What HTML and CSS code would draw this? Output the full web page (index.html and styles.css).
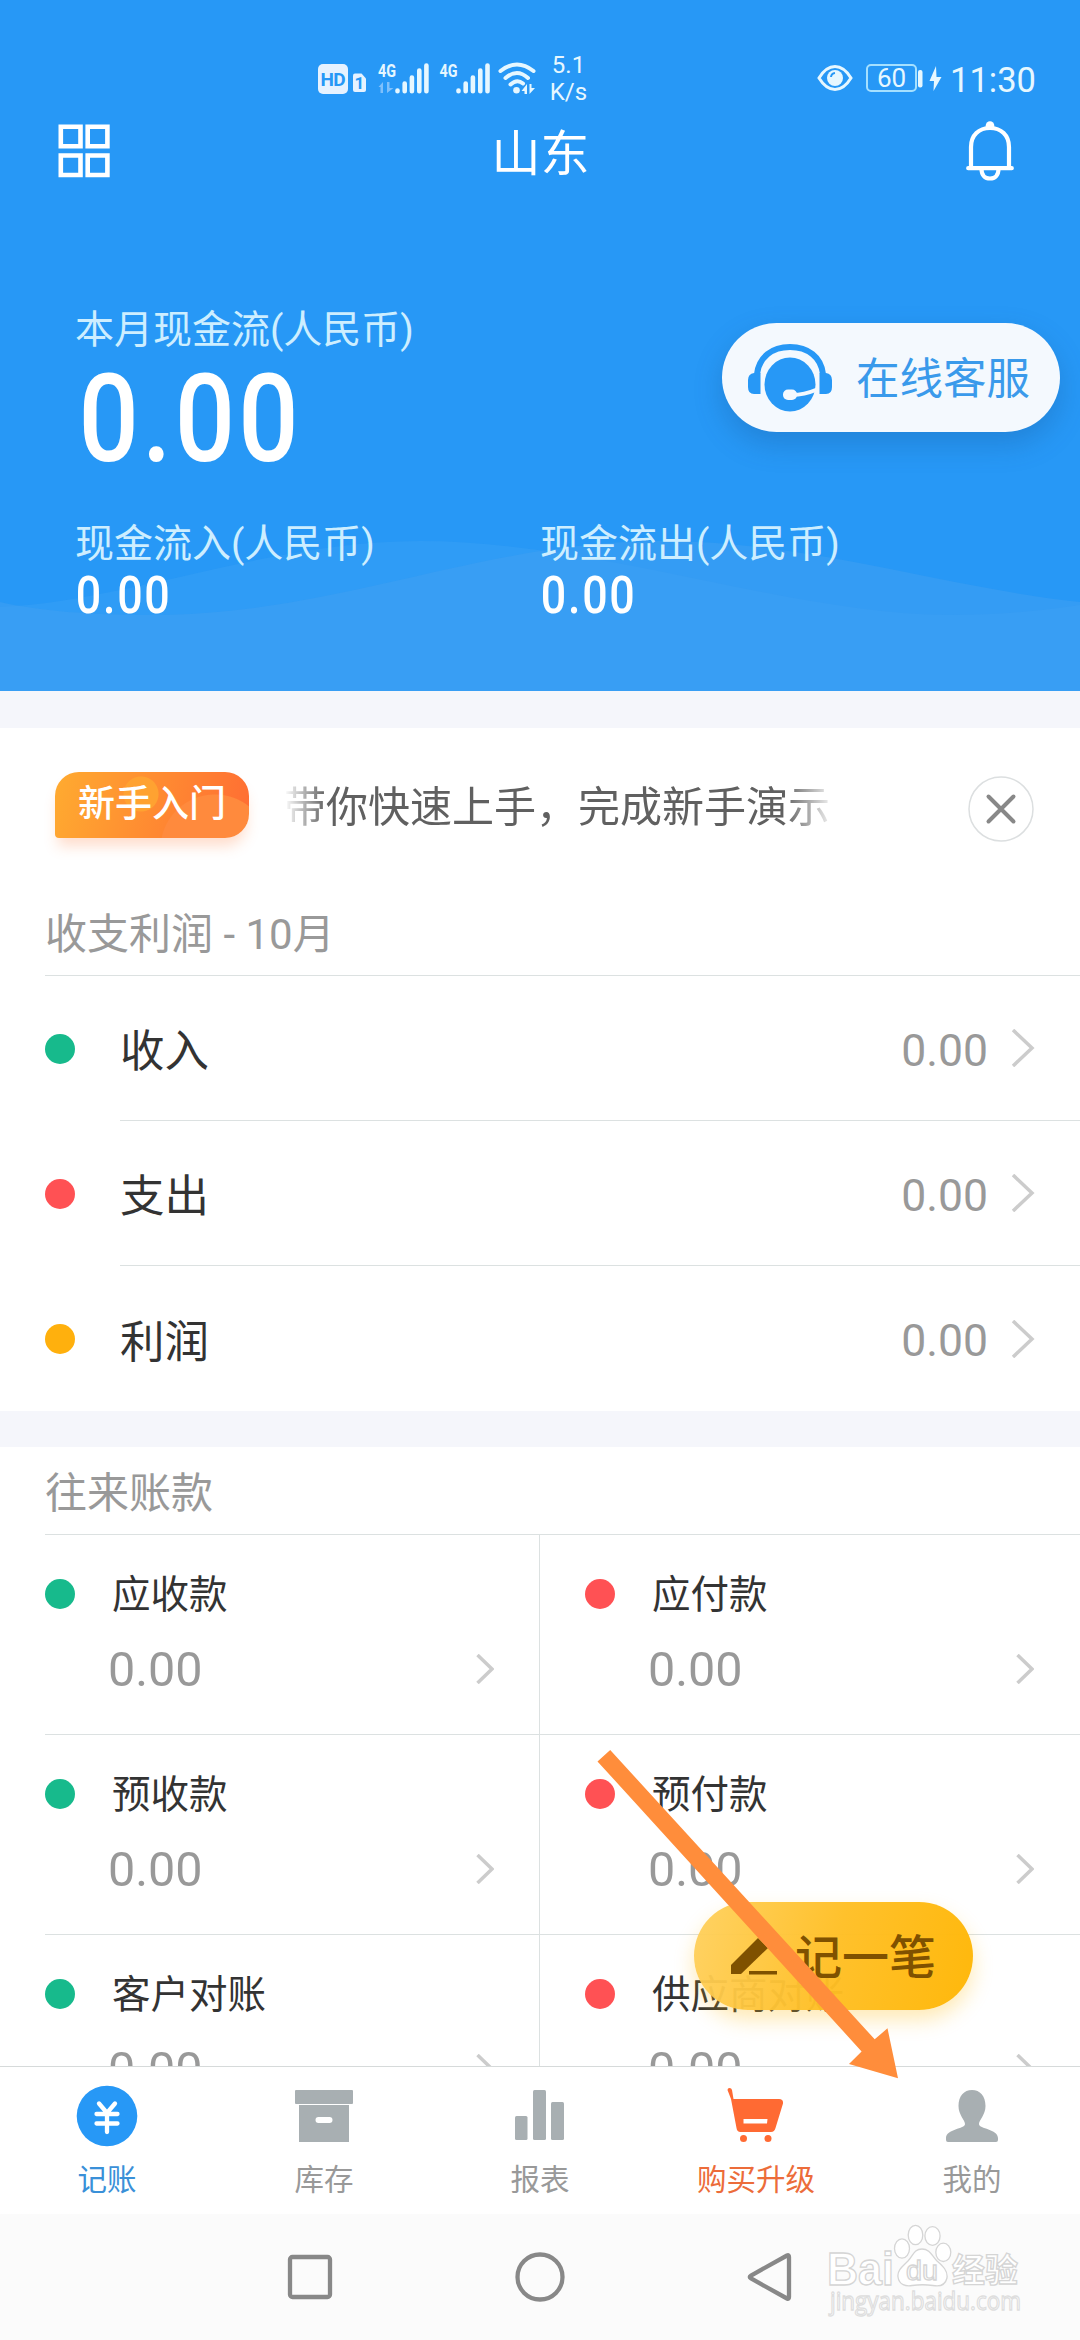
FILE: index.html
```html
<!DOCTYPE html>
<html lang="zh-CN">
<head>
<meta charset="utf-8">
<title>记账</title>
<link rel="stylesheet" href="styles.css">
</head>
<body>
<div class="phone">
  <header class="hero">
    <svg class="waves" viewBox="0 0 1080 160" preserveAspectRatio="none">
      <path class="wave" d="M0 76C130 70 270 10 420 10C600 10 790 84 950 84C1000 84 1040 80 1080 74V160H0Z"/>
      <path class="wave wave-front" d="M0 71C40 80 90 84 150 84C340 84 480 10 660 10C810 10 950 58 1080 71V160H0Z"/>
    </svg>
    <div class="status">
      <svg class="signals" viewBox="0 0 222 40" width="222" height="40">
        <rect x="0" y="10" width="30" height="30" rx="5" fill="#e6f2ff"/>
        <text x="15" y="31.500" class="hd" textLength="25">HD</text>
        <path d="M35 21.500Q35 19.500 37 19.500H43.500L48 24.500V36Q48 38 46 38H37Q35 38 35 36Z" fill="#e6f2ff"/>
        <text x="41.500" y="35" class="sim">1</text>
        <text x="60" y="23" class="gen" textLength="18" lengthAdjust="spacingAndGlyphs">4G</text>
        <path d="M65 28V39H62.500V33H60.500ZM69 39V28H71.500V34H75.500Z" fill="#7fc0fb"/>
        <g class="bars"><path d="M79.500 37.200V36.500M86.700 37.200V29.500M93.900 37.200V23.500M101.300 37.200V16.500M108.400 37.200V11.500"/></g>
        <text x="121.500" y="23" class="gen" textLength="18" lengthAdjust="spacingAndGlyphs">4G</text>
        <g class="bars"><path d="M140.500 37.200V36.500M147.700 37.200V29.500M154.900 37.200V23.500M162.300 37.200V16.500M169.500 37.200V11.500"/></g>
        <g fill="none" stroke="#e6f7ff" stroke-width="4" stroke-linecap="round"><path d="M182.500 17Q199 4 215.500 17M187.500 24Q199 14 210 24M192.500 30.500Q199 24.500 205 29.500"/></g>
        <circle cx="198.500" cy="36.300" r="3.300" fill="#e6f7ff"/>
        <path d="M209 30V40H206.500V37H203.500ZM211.500 40V30H213.500V34H217Z" fill="#e6f7ff"/>
      </svg>
      <div class="speed"><span>5.1</span><span>K/s</span></div>
      <svg class="eye" viewBox="0 0 36 28" width="36" height="28">
        <path d="M2 14Q9 2.500 18 2.500T34 14Q27 25.500 18 25.500T2 14Z" fill="none" stroke="#e6f7ff" stroke-width="3"/>
        <circle cx="18" cy="14" r="8" fill="#e6f7ff"/><path d="M14 13A4.500 4.500 0 0 1 18 9" fill="none" stroke="#2798f6" stroke-width="2"/>
      </svg>
      <div class="battery">60</div>
      <svg class="charge" viewBox="0 0 26 28" width="26" height="28"><rect x="1" y="5" width="4.500" height="17.500" rx="2" fill="#e6f7ff"/><path d="M19 1L12.500 16H17L16.500 26L24.500 12H19.500Z" fill="#e6f7ff"/></svg>
      <div class="clock">11:30</div>
    </div>
    <div class="titlebar">
      <svg viewBox="0 0 52 54" width="52" height="54" fill="none" stroke="#fff" stroke-width="4.600"><path d="M2.800 2.800H22.500V22.300H2.800ZM29.700 2.800H49.400V22.300H29.700ZM2.800 31.500H22.500V51H2.800ZM29.700 31.500H49.400V51H29.700Z"/></svg>
      <h1>山东</h1>
      <svg viewBox="0 0 48 60" width="48" height="60" fill="none" stroke="#fff" stroke-width="4.200" stroke-linecap="round"><circle cx="24" cy="4.500" r="4.300" fill="#fff" stroke="none"/><path d="M5 46V26C5 14 13 7 24 7S43 14 43 26V46M2.200 47.200H45.800"/><path d="M15.500 48C15.500 54 19 57.500 24 57.500S32.500 54 32.500 48"/></svg>
    </div>
    <div class="summary">
      <p class="caption">本月现金流(人民币)</p>
      <p class="amount amount-big">0.00</p>
      <div class="flows">
        <div><p class="caption">现金流入(人民币)</p><p class="amount">0.00</p></div>
        <div><p class="caption">现金流出(人民币)</p><p class="amount">0.00</p></div>
      </div>
    </div>
    <button class="service">
      <svg viewBox="0 0 84 68" width="84" height="68">
        <path d="M9 30C11 13 24 3 42 3S73 13 75 30" fill="none" stroke="#2798f6" stroke-width="6"/>
        <path d="M12.500 29V50H6Q0 50 0 43V36Q0 30 6 29ZM71.500 29V50H78Q84 50 84 43V36Q84 30 78 29Z" fill="#2798f6"/>
        <ellipse cx="42" cy="40.500" rx="25.500" ry="27" fill="#2798f6"/>
        <path d="M44 51Q56 51 69 45.500" fill="none" stroke="#f4f9fe" stroke-width="4"/>
        <rect x="35" y="45.500" width="14" height="10.500" rx="5" fill="#f4f9fe"/>
      </svg>
      <span>在线客服</span>
    </button>
  </header>

  <main class="content">
    <section class="card">
      <div class="guide">
        <div class="tag"><span>新手入门</span></div>
        <div class="marquee">带你快速上手，完成新手演示</div>
        <svg class="close" viewBox="0 0 66 66" width="66" height="66" fill="none"><circle cx="33" cy="33" r="32" stroke="#dcdfe0" stroke-width="1.500"/><path d="M20.500 20.500L45.500 45.500M45.500 20.500L20.500 45.500" stroke="#888" stroke-width="4" stroke-linecap="round"/></svg>
      </div>
      <h2>收支利润 - 10月</h2>
      <ul class="rows">
        <li><i class="dot green"></i><div class="row"><span>收入</span><b>0.00</b><svg class="chev" viewBox="0 0 24 38" width="24" height="38"><path d="M2 1L21 19L2 37"/></svg></div></li>
        <li><i class="dot red"></i><div class="row"><span>支出</span><b>0.00</b><svg class="chev" viewBox="0 0 24 38" width="24" height="38"><path d="M2 1L21 19L2 37"/></svg></div></li>
        <li><i class="dot amber"></i><div class="row"><span>利润</span><b>0.00</b><svg class="chev" viewBox="0 0 24 38" width="24" height="38"><path d="M2 1L21 19L2 37"/></svg></div></li>
      </ul>
    </section>
    <section class="card accounts">
      <h2>往来账款</h2>
      <div class="grid">
        <div class="cell"><i class="dot green"></i><span>应收款</span><b>0.00</b><svg class="chev" viewBox="0 0 18 30" width="18" height="30"><path d="M1.500 1L16 15L1.500 29"/></svg></div>
        <div class="cell"><i class="dot red"></i><span>应付款</span><b>0.00</b><svg class="chev" viewBox="0 0 18 30" width="18" height="30"><path d="M1.500 1L16 15L1.500 29"/></svg></div>
        <div class="cell"><i class="dot green"></i><span>预收款</span><b>0.00</b><svg class="chev" viewBox="0 0 18 30" width="18" height="30"><path d="M1.500 1L16 15L1.500 29"/></svg></div>
        <div class="cell"><i class="dot red"></i><span>预付款</span><b>0.00</b><svg class="chev" viewBox="0 0 18 30" width="18" height="30"><path d="M1.500 1L16 15L1.500 29"/></svg></div>
        <div class="cell"><i class="dot green"></i><span>客户对账</span><b>0.00</b><svg class="chev" viewBox="0 0 18 30" width="18" height="30"><path d="M1.500 1L16 15L1.500 29"/></svg></div>
        <div class="cell"><i class="dot red"></i><span>供应商对账</span><b>0.00</b><svg class="chev" viewBox="0 0 18 30" width="18" height="30"><path d="M1.500 1L16 15L1.500 29"/></svg></div>
      </div>
    </section>
  </main>

  <nav class="tabs">
    <a class="active"><svg viewBox="0 0 62 62" width="62" height="62"><circle cx="31" cy="31" r="30.300" fill="#2798f6"/><path d="M23 18.500L31 28L39 18.500M31 28V47M20.500 29H41.500M20.500 38.500H41.500" fill="none" stroke="#fff" stroke-width="4.300" stroke-linecap="round"/></svg>记账</a>
    <a><svg viewBox="0 0 62 62" width="62" height="62" fill="#a8afb2"><rect x="2" y="5" width="58" height="14" rx="1"/><path fill-rule="evenodd" d="M6 20H56V57H6ZM25.500 32A3 3 0 0 0 25.500 38H36.500A3 3 0 0 0 36.500 32Z"/></svg>库存</a>
    <a><svg viewBox="0 0 62 62" width="62" height="62" fill="#a8afb2"><rect x="6" y="31" width="12.500" height="24" rx="1.500"/><rect x="24" y="5" width="13" height="50" rx="1.500"/><rect x="42" y="17" width="13" height="38" rx="1.500"/></svg>报表</a>
    <a class="hot"><svg viewBox="0 0 62 62" width="62" height="62" fill="#ff6a33"><path fill-rule="evenodd" d="M2.500 5Q2.500 3 4.500 3Q6.500 3 7 5L8.500 14H54Q58.500 14 58 18.500L50.500 43Q49.500 47 46 47H15.500Q12 47 11.500 43L6 14ZM18.500 34V38.500H42L42.500 34Z"/><circle cx="18.500" cy="53.500" r="3.500"/><circle cx="43" cy="53.500" r="3.500"/></svg>购买升级</a>
    <a><svg viewBox="0 0 62 62" width="62" height="62" fill="#a8afb2"><path d="M31 5C39 5 44.500 11 44.500 21C44.500 30 38 35 38 39C38 44 57 44 57 53V55Q57 57 55 57H7Q5 57 5 55V53C5 44 24 44 24 39C24 35 17.500 30 17.500 21C17.500 11 23 5 31 5Z"/></svg>我的</a>
  </nav>
  <div class="sysnav">
    <svg viewBox="0 0 50 50" width="50" height="50"><rect x="5" y="5" width="40" height="40" rx="2.500"/></svg>
    <svg viewBox="0 0 50 50" width="50" height="50"><circle cx="25" cy="25" r="22.500"/></svg>
    <svg viewBox="0 0 50 50" width="50" height="50"><path d="M42 3.500Q44 2.500 44 5V45Q44 47.500 42 46.500L6 26.500Q3.500 25 6 23.500Z"/></svg>
  </div>

  <button class="fab"><svg viewBox="0 0 46 38" width="46" height="38" fill="#7f5100"><path d="M0 28L27 1L37 11L10 37H0Z"/><rect x="18" y="34" width="28" height="3.500"/></svg><span>记一笔</span></button>
  <svg class="arrow" viewBox="0 0 302 330" width="302" height="330"><path d="M.5 12.400L13.200 1L277.700 290.300L290.500 279.300L301 329.200L252 315L264.600 302.400Z" fill="#ff8d3b"/></svg>
  <svg class="watermark" viewBox="0 0 220 115" width="220" height="115">
    <g class="outline">
      <text x="7" y="69.500" class="wm-latin" textLength="67" lengthAdjust="spacingAndGlyphs">Bai</text>
      <ellipse cx="95.500" cy="20" rx="7.300" ry="9.700"/><ellipse cx="112.500" cy="21" rx="7.600" ry="9.300"/><ellipse cx="82" cy="33.500" rx="7.500" ry="9.700"/><ellipse cx="123.300" cy="37.300" rx="7.500" ry="9.200"/>
      <path d="M102 34C110 34 112 41 117 46C123 51 128 56 127 63C125 71 118 71.500 113 70.500C106 69.500 99 69.500 92 70.500C86 71.500 79 70 78 62C77 55 83 51 88 46C93 41 94 34 102 34Z"/>
      <text x="86" y="65" class="wm-du" textLength="32" lengthAdjust="spacingAndGlyphs">du</text>
      <text x="132" y="67" class="wm-cn" textLength="66">经验</text>
      <text x="10" y="95" class="wm-url" textLength="191" lengthAdjust="spacingAndGlyphs">jingyan.baidu.com</text>
    </g>
  </svg>
</div>
</body>
</html>
```
FILE: styles.css
```css
* { box-sizing: border-box; }
body, h1, h2, p, ul { margin: 0; padding: 0; }
body { font-family: Roboto, "Noto Sans CJK SC", sans-serif; background: #fff; }
svg { display: block; flex: none; }
button { border: 0; font: inherit; }
.phone { position: relative; width: 1080px; height: 2340px; overflow: hidden; display: flex; flex-direction: column; }

.hero { position: relative; height: 691px; flex: none; background: #2798f6; color: #fff; }
.waves { position: absolute; left: 0; bottom: 0; width: 1080px; height: 160px; }
.wave { fill: #379ff5; fill-opacity: .5; }
.wave-front { fill: #429ff1; }
.status { position: relative; height: 118px; padding: 54px 44px 0 318px; display: flex; align-items: flex-start; color: #e6f7ff; }
.hd { font: 700 19px Roboto, sans-serif; fill: #2798f6; text-anchor: middle; }
.sim { font: 700 17px Roboto, sans-serif; fill: #2798f6; text-anchor: middle; }
.gen { font: 700 19px Roboto, sans-serif; fill: #e6f7ff; }
.bars { stroke: #e6f7ff; stroke-width: 4.600; stroke-linecap: round; }
.speed { width: 58px; display: flex; flex-direction: column; align-items: center; font-size: 24px; line-height: 27px; margin: -2px 0 0; }
.eye { margin: 10px 13px 0 220px; }
.battery { width: 52px; height: 28px; margin-top: 10px; border: 2px solid #a5e0ff; border-radius: 5px; font-size: 26px; line-height: 25px; text-align: center; }
.charge { margin-top: 11px; }
.clock { font-size: 34.500px; line-height: 40px; margin: 6px 0 0 7px; white-space: nowrap; }
.titlebar { position: relative; height: 66px; padding: 0 66px 0 58px; display: flex; align-items: center; justify-content: space-between; }
.titlebar h1 { font-size: 49px; font-weight: 400; line-height: 64px; padding: 7px 0 0 5px; }
.summary { position: relative; padding: 120px 75px 0; }
.caption { font-size: 39px; line-height: 52px; color: #cdeeff; white-space: nowrap; }
.amount { font-size: 51.500px; line-height: 60px; font-weight: 500; letter-spacing: .038em; transform: scaleX(.87); transform-origin: 0 50%; padding-left: 1px; }
.amount-big { font-size: 122px; line-height: 140px; margin-top: -6px; padding-left: 4px; letter-spacing: .03em; }
.flows { display: grid; grid-template-columns: 465px 1fr; margin-top: 28px; }
.flows .amount { margin-top: -4px; }
.service { position: absolute; left: 722px; top: 323px; width: 338px; height: 109px; padding: 0 30px 0 26px; border-radius: 55px; background: #f4f9fe; color: #3a9aeb; font-size: 43.500px; display: flex; align-items: center; justify-content: space-between; box-shadow: 0 12px 28px rgba(20, 80, 140, .28); white-space: nowrap; }
.service span { padding-bottom: 5px; }

.content { height: 1375px; flex: none; overflow: hidden; padding-top: 37px; background: #f5f6fb; display: flex; flex-direction: column; gap: 36px; }
.card { flex: none; background: #fff; }
.guide { height: 162px; display: flex; align-items: center; padding: 0 46px 0 55px; }
.tag { width: 194px; height: 66px; margin-top: -8px; border-radius: 24px 24px 24px 4px; background: radial-gradient(circle at 86px 22px, #ffa231 0 17px, transparent 18px), radial-gradient(circle at 160px 77px, #ff8a3d 0 54px, transparent 55px), linear-gradient(105deg, #ffab30, #ff6c33); color: #fff; font-size: 37px; font-weight: 500; line-height: 66px; text-align: center; box-shadow: 0 11px 14px -3px rgba(255, 120, 50, .25); }
.marquee { width: 555px; margin: -2px 128px 0 35px; font-size: 42px; line-height: 60px; color: #606060; white-space: nowrap; overflow: hidden; -webkit-mask-image: linear-gradient(90deg, transparent 0, #000 42px, #000 500px, transparent 552px); mask-image: linear-gradient(90deg, transparent 0, #000 42px, #000 500px, transparent 552px); }
.close { margin-left: 1px; }
.card h2 { height: 86px; margin-left: 45px; border-bottom: 1px solid #dce1e1; color: #999; font-size: 42px; font-weight: 400; line-height: 90px; }
.rows { list-style: none; }
.rows li { height: 145px; padding-left: 45px; display: flex; align-items: center; }
.dot { width: 30px; height: 30px; border-radius: 50%; display: block; flex: none; }
.green { background: #17ba8c; }
.red { background: #ff5154; }
.amber { background: #ffb00d; }
.row { flex: 1; height: 145px; margin-left: 45px; padding-right: 45px; display: flex; align-items: center; border-bottom: 1px solid #dce1e1; font-size: 44.500px; color: #333; }
.rows li:last-child .row { border-bottom: 0; }
.row span { padding-bottom: 1px; }
.row b { font-weight: 400; color: #999; margin: 5px 23px 0 auto; }
.chev { fill: none; stroke: #ccc; stroke-width: 3.500; }
.accounts h2 { height: 88px; line-height: 94px; }
.grid { display: grid; grid-template-columns: 540px 540px; background: linear-gradient(#dce1e1, #dce1e1) 539px 0 / 1px 100% no-repeat; }
.cell { height: 200px; margin-left: 45px; padding: 30px 46px 0 0; border-bottom: 1px solid #dce1e1; display: grid; grid-template-columns: 67px 1fr 18px; grid-template-rows: 58px 92px; align-items: center; }
.cell:nth-child(even) { margin-left: 0; padding-left: 45px; }
.cell span { grid-column: 2 / 4; font-size: 38.500px; line-height: 58px; color: #333; padding-top: 1px; }
.cell b { grid-column: 2; margin-left: -4px; font-size: 48.500px; font-weight: 400; color: #999; }

.tabs { height: 148px; flex: none; background: #fff; border-top: 1px solid #d6dada; display: grid; grid-template-columns: repeat(5, 1fr); }
.tabs a { display: flex; flex-direction: column; align-items: center; padding-top: 18px; gap: 12px; font-size: 29.500px; line-height: 42px; color: #999; }
.tabs a:first-child { padding-right: 2px; }
.tabs .active { color: #3a90d8; }
.tabs .hot { color: #ec6c3a; }
.sysnav { flex: 1; background: #fbfbfb; display: flex; justify-content: center; gap: 180px; padding-top: 38px; }
.sysnav svg { fill: none; stroke: #888; stroke-width: 4.300; }

.fab { position: absolute; left: 694px; top: 1902px; width: 279px; height: 108px; padding: 0 37px; border-radius: 54px; background: linear-gradient(105deg, rgba(255, 208, 92, .95), rgba(255, 191, 37, .97) 50%, rgba(255, 183, 8, .99)); color: #7f5100; font-size: 47px; font-weight: 500; display: flex; align-items: center; justify-content: space-between; white-space: nowrap; box-shadow: 0 10px 20px rgba(255, 184, 12, .3); }
.fab span { padding-bottom: 5px; }
.arrow { position: absolute; left: 597px; top: 1749px; }
.watermark { position: absolute; left: 820px; top: 2215px; }
.outline { fill: #fff; stroke: #d5d5d5; stroke-width: 1.300; }
.wm-latin { font: 700 46px "Liberation Sans", sans-serif; }
.wm-du { font: 400 27px "Liberation Sans", sans-serif; }
.wm-cn { font: 700 33px "Noto Sans CJK SC", sans-serif; }
.wm-url { font: 400 25px "Open Sans", sans-serif; stroke: #dedede; }
```
